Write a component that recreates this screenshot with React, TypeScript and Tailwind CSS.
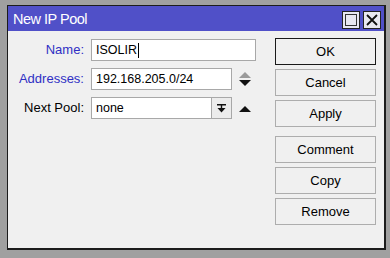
import React from 'react';

const Btn: React.FC<{ label: string; def?: boolean; className?: string }> = ({ label, def, className = '' }) => (
  <button
    type="button"
    className={`w-[101px] h-[27px] flex items-center justify-center bg-[#f0f0f0] text-[13px] text-black border ${
      def ? 'border-[#1a1a1a]' : 'border-[#adadad]'
    } ${className}`}
  >
    {label}
  </button>
);

const Tri: React.FC<{ up?: boolean; color: string }> = ({ up, color }) => (
  <svg width="12" height="6" viewBox="0 0 12 6" className="block">
    <polygon points={up ? '0,6 12,6 6,0' : '0,0 12,0 6,6'} fill={color} />
  </svg>
);

const App: React.FC = () => {
  return (
    <div className="w-[390px] h-[258px] bg-[#a0a0a0] pl-[7px] pt-[5px] font-['Liberation_Sans',Arial,sans-serif]">
      <div className="w-[379px] h-[245px] flex flex-col bg-[#f0f0f0] border-l border-t border-r-2 border-b-2 border-[#1c1c1c]">
        {/* title bar */}
        <div className="h-[25px] bg-[#5050c8] flex items-center justify-between pl-[5px] pr-[3px]">
          <span className="text-white text-[14.5px] tracking-[-0.5px] leading-none mt-[1px]">New IP Pool</span>
          <div className="flex gap-[3px] mt-[2px]">
            <div className="w-[18px] h-[18px] bg-[#e8e8f0] border border-[#222] flex items-center justify-center">
              <div className="w-[12px] h-[12px] border border-[#333]" />
            </div>
            <div className="w-[18px] h-[18px] bg-[#e8e8f0] border border-[#222] flex items-center justify-center">
              <svg width="12" height="12" viewBox="0 0 12 12">
                <path d="M1 1 L11 11 M11 1 L1 11" stroke="#111" strokeWidth="1.8" />
              </svg>
            </div>
          </div>
        </div>

        {/* body */}
        <div className="flex-1 flex justify-between items-start pt-[7px] pr-[8px]">
          <div className="mt-[1px] grid grid-cols-[76px_auto] content-start gap-x-[7px] gap-y-[7px] items-center text-[13px]">
            <span className="text-right text-[#2f2fc4]">Name:</span>
            <div className="w-[165px] h-[22px] bg-white border border-[#a8a8a8] flex items-center pl-[4px] text-[12.5px] text-black">
              ISOLIR
              <span className="inline-block w-px h-[15px] bg-black ml-[1px]" />
            </div>

            <span className="text-right text-[#2f2fc4]">Addresses:</span>
            <div className="flex items-center">
              <div className="w-[141px] h-[22px] bg-white border border-[#a8a8a8] flex items-center pl-[4px] text-[12.5px] text-black">
                192.168.205.0/24
              </div>
              <div className="ml-[7px] flex flex-col gap-[2px]">
                <Tri up color="#9a9a9a" />
                <Tri color="#111" />
              </div>
            </div>

            <span className="text-right text-black">Next Pool:</span>
            <div className="flex items-center">
              <div className="w-[120px] h-[22px] bg-white border border-[#a8a8a8] border-r-0 flex items-center pl-[4px] text-[12.5px] text-black">
                none
              </div>
              <div className="w-[21px] h-[22px] bg-[#ececec] border border-[#a8a8a8] flex items-center justify-center">
                <svg width="9" height="9" viewBox="0 0 9 9">
                  <rect x="0" y="0" width="9" height="1.5" fill="#111" />
                  <rect x="3.8" y="1" width="1.4" height="3" fill="#111" />
                  <polygon points="0.5,4 8.5,4 4.5,8.5" fill="#111" />
                </svg>
              </div>
              <div className="ml-[7px] mt-[1px]">
                <Tri up color="#111" />
              </div>
            </div>
          </div>

          <div className="flex flex-col">
            <Btn label="OK" def />
            <Btn label="Cancel" className="mt-[4px]" />
            <Btn label="Apply" className="mt-[4px]" />
            <Btn label="Comment" className="mt-[9px]" />
            <Btn label="Copy" className="mt-[4px]" />
            <Btn label="Remove" className="mt-[4px]" />
          </div>
        </div>
      </div>
    </div>
  );
};

export default App;
